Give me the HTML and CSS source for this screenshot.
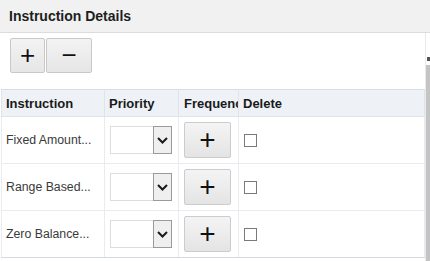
FILE: index.html
```html
<!DOCTYPE html>
<html lang="en">

<head>
    <meta charset="UTF-8">
    <meta name="viewport" content="width=device-width, initial-scale=1.0">
    <title>Instruction Details</title>
    <link rel="stylesheet" href="styles.css">
</head>

<body>
    <div class="panelHeader">Instruction Details</div>
    <div class="panelBody">
        <div class="panelContent">
            <div class="toolbar">
                <button class="toolBtn plus" type="button"><span class="glyph">+</span></button>
                <button class="toolBtn minus" type="button"><span class="glyph">&minus;</span></button>
            </div>
            <table class="instrTable">
                <thead>
                    <tr>
                        <th class="colInstr">Instruction</th>
                        <th class="colPrio">Priority</th>
                        <th class="colFreq"><div class="clip">Frequency</div></th>
                        <th class="colDel">Delete</th>
                    </tr>
                </thead>
                <tbody>
                    <tr>
                        <td>Fixed Amount...</td>
                        <td><div class="selectBox"><span class="selText"></span><span class="selArrow"><svg width="11" height="7" viewBox="0 0 11 7"><path d="M1 1 L5.5 5.5 L10 1" fill="none" stroke="#1a1a1a" stroke-width="2"/></svg></span></div></td>
                        <td><button class="freqBtn" type="button">+</button></td>
                        <td><span class="chk"></span></td>
                    </tr>
                    <tr>
                        <td>Range Based...</td>
                        <td><div class="selectBox"><span class="selText"></span><span class="selArrow"><svg width="11" height="7" viewBox="0 0 11 7"><path d="M1 1 L5.5 5.5 L10 1" fill="none" stroke="#1a1a1a" stroke-width="2"/></svg></span></div></td>
                        <td><button class="freqBtn" type="button">+</button></td>
                        <td><span class="chk"></span></td>
                    </tr>
                    <tr>
                        <td>Zero Balance...</td>
                        <td><div class="selectBox"><span class="selText"></span><span class="selArrow"><svg width="11" height="7" viewBox="0 0 11 7"><path d="M1 1 L5.5 5.5 L10 1" fill="none" stroke="#1a1a1a" stroke-width="2"/></svg></span></div></td>
                        <td><button class="freqBtn" type="button">+</button></td>
                        <td><span class="chk"></span></td>
                    </tr>
                </tbody>
            </table>
        </div>
        <div class="scrollTrack">
            <span class="scrollMark"></span>
            <span class="scrollThumb"></span>
        </div>
    </div>
</body>

</html>
```

FILE: styles.css
```css
html, body {
    margin: 0;
    padding: 0;
}

body {
    width: 430px;
    height: 261px;
    overflow: hidden;
    background-color: #ffffff;
    font-family: "Liberation Sans", Arial, sans-serif;
    color: #333333;
}

.panelHeader {
    height: 32px;
    line-height: 32px;
    padding-left: 9px;
    background-color: #f1f1f1;
    border-bottom: 1px solid #dcdcdc;
    font-size: 14px;
    font-weight: bold;
    color: #1e1e1e;
}

.panelBody {
    display: flex;
    height: 228px;
}

.panelContent {
    width: 425px;
    border-right: 1px solid #e6e9ee;
}

.toolbar {
    display: flex;
    gap: 1px;
    padding: 5px 0 0 10px;
    height: 35px;
}

.toolBtn {
    height: 35px;
    margin: 0;
    padding: 0;
    border: 1px solid #c8c8c8;
    border-radius: 2px;
    background: linear-gradient(#f3f3f3, #e6e6e6);
    color: #111111;
    font-family: "Liberation Sans", Arial, sans-serif;
}

.toolBtn.plus {
    width: 35px;
}

.toolBtn.minus {
    width: 46px;
}

.glyph {
    font-size: 26px;
    line-height: 26px;
    position: relative;
    top: -1px;
}

.instrTable {
    margin: 16px 0 0 1px;
    width: 424px;
    border-collapse: collapse;
    table-layout: fixed;
    font-size: 12.3px;
}

.instrTable th {
    height: 26px;
    padding: 0 5px 0 4px;
    text-align: left;
    font-size: 13px;
    font-weight: bold;
    color: #1a1a1a;
    background-color: #eef2f7;
    border: 1px solid #dfe4ea;
    border-top-color: #d7dde4;
}

.colInstr {
    width: 93px;
}

.colPrio {
    width: 64px;
}

.colFreq {
    width: 54px;
}

.instrTable th.colFreq {
    padding-right: 0;
    padding-left: 5px;
}

.clip {
    overflow: hidden;
    white-space: nowrap;
    width: 54px;
}

.instrTable td {
    height: 46px;
    padding: 0 5px 0 4px;
    border: 1px solid #e8ebef;
    border-top: 0;
    color: #3a3a3a;
    white-space: nowrap;
}

.instrTable td:nth-child(2) {
    padding-left: 5px;
}

.instrTable td:nth-child(3) {
    padding-left: 5px;
}

.instrTable td:nth-child(4) {
    padding-left: 5px;
}

.instrTable tr:last-child td {
    border-bottom: 1px solid #d3d9e0;
}

.selectBox {
    display: flex;
    width: 62px;
    height: 28px;
}

.selText {
    flex: 1;
    border: 1px solid #dddddd;
    border-right: 0;
    background-color: #ffffff;
}

.selArrow {
    width: 17px;
    display: flex;
    align-items: center;
    justify-content: center;
    border: 1px solid #9a9a9a;
    background-color: #efefef;
}

.freqBtn {
    width: 47px;
    height: 36px;
    margin: 0;
    padding: 0;
    border: 1px solid #cccccc;
    border-radius: 2px;
    background: linear-gradient(#f4f4f4, #e4e4e4);
    color: #111111;
    font-family: "Liberation Sans", Arial, sans-serif;
    font-size: 28px;
    line-height: 28px;
}

.chk {
    display: block;
    width: 11px;
    height: 11px;
    border: 1px solid #7a7a7a;
    background-color: #ffffff;
}

.scrollTrack {
    width: 4px;
    display: flex;
    flex-direction: column;
    align-items: center;
    padding-top: 24px;
}

.scrollMark {
    width: 3px;
    height: 4px;
    background-color: #555555;
}

.scrollThumb {
    margin-top: 4px;
    width: 4px;
    flex: 1;
    background-color: #c4c4c4;
}
```
